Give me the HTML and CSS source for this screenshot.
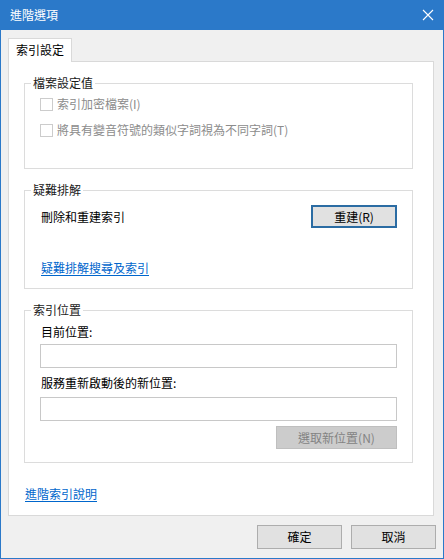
FILE: index.html
```html
<!DOCTYPE html>
<html lang="zh-Hant">
<head>
<meta charset="utf-8">
<title>進階選項</title>
<link rel="stylesheet" href="styles.css">
</head>
<body>
<div class="window">
  <div class="titlebar">
    <span class="title">進階選項</span>
    <svg class="close" width="12" height="12" viewBox="0 0 12 12"><path d="M1 1 L11 11 M11 1 L1 11" stroke="#fff" stroke-width="1.1" fill="none"/></svg>
  </div>
  <div class="tabs"><div class="tab">索引設定</div></div>
  <div class="panel">
    <div class="group g1">
      <div class="legend">檔案設定值</div>
      <div class="row check"><span class="box"></span><span class="dis">索引加密檔案(I)</span></div>
      <div class="row check"><span class="box"></span><span class="dis">將具有變音符號的類似字詞視為不同字詞(T)</span></div>
    </div>
    <div class="group g2">
      <div class="legend">疑難排解</div>
      <div class="rebuild-row"><span>刪除和重建索引</span><button class="btn default">重建(R)</button></div>
      <a class="link trouble" href="#">疑難排解搜尋及索引</a>
    </div>
    <div class="group g3">
      <div class="legend">索引位置</div>
      <div class="label l1">目前位置:</div>
      <div class="input"></div>
      <div class="label l2">服務重新啟動後的新位置:</div>
      <div class="input i2"></div>
      <div class="btnrow"><button class="btn disabled">選取新位置(N)</button></div>
    </div>
    <a class="link help" href="#">進階索引說明</a>
  </div>
  <div class="footer">
    <button class="btn foot">確定</button>
    <button class="btn foot">取消</button>
  </div>
</div>
</body>
</html>
```
FILE: styles.css
```css
* { box-sizing: border-box; }
html, body { margin: 0; padding: 0; }
body {
  font-family: "Noto Sans CJK TC", "Noto Sans", "Liberation Sans", sans-serif;
  font-size: 12px;
  line-height: 16px;
  color: #000;
  background: #f0f0f0;
}
.window {
  width: 444px;
  height: 559px;
  background: #f0f0f0;
  border: 1px solid #2b79c9;
  border-top: none;
  display: flex;
  flex-direction: column;
}
.titlebar {
  height: 30px;
  margin: 0 -1px;
  background: #2b79c9;
  display: flex;
  align-items: center;
  justify-content: space-between;
  padding: 0 10px 0 10px;
  color: #fff;
}
.title { font-size: 12px; line-height: 16px; margin-top: -1px; }
.close { margin-right: 0; }
.tabs {
  margin-top: 8px;
  padding-left: 7px;
  display: flex;
  position: relative;
  z-index: 1;
}
.tab {
  width: 64px;
  height: 24px;
  background: #fff;
  border: 1px solid #d9d9d9;
  border-bottom: none;
  padding: 3px 0 0 7px;
  margin-bottom: -1px;
}
.panel {
  margin-left: 7px;
  width: 426px;
  height: 455px;
  background: #fff;
  border: 1px solid #d9d9d9;
  padding: 0 20px 0 15px;
  display: flex;
  flex-direction: column;
  align-items: flex-start;
}
.group {
  width: 389px;
  border: 1px solid #dcdcdc;
  padding: 0 15px;
  margin-top: 21px;
}
.legend {
  width: max-content;
  height: 16px;
  margin: -9px 0 0 -9px;
  padding: 0 2px;
  background: #fff;
  color: #1a1a1a;
}
.g1 { padding-bottom: 25px; }
.row { height: 26px; display: flex; align-items: center; }
.box {
  width: 13px;
  height: 13px;
  border: 1px solid #cccccc;
  background: #fff;
  margin-right: 4px;
  flex: none;
}
.dis { color: #8c8c8c; }
.g2 { padding-bottom: 12px; }
.rebuild-row {
  margin-top: 7px;
  display: flex;
  justify-content: space-between;
  align-items: center;
  padding-left: 1px;
  height: 23px;
}
.btn {
  font-family: inherit;
  font-size: 12px;
  line-height: 16px;
  padding: 0;
  margin: 0;
  background: #e1e1e1;
  border: 1px solid #adadad;
  color: #000;
}
.btn.default {
  width: 86px;
  height: 23px;
  border: 2px solid #2b6ca3;
}
.link {
  color: #0066cc;
  text-decoration: underline;
  text-underline-offset: 2px;
  display: block;
}
.trouble { margin-top: 32px; margin-left: 1px; }
.g3 { padding-bottom: 13px; }
.label { padding-left: 1px; }
.l1 { margin-top: 6px; }
.input {
  margin-top: 4px;
  height: 24px;
  border: 1px solid #c8c8c8;
  background: #fff;
}
.l2 { margin-top: 7px; }
.i2 { margin-top: 6px; }
.btnrow { display: flex; justify-content: flex-end; margin-top: 5px; }
.btn.disabled {
  width: 121px;
  height: 23px;
  background: #cccccc;
  border: 1px solid #bfbfbf;
  color: #838383;
}
.help { margin-top: 23px; margin-left: 1px; }
.footer {
  display: flex;
  justify-content: flex-end;
  gap: 9px;
  margin-top: 9px;
  padding-right: 7px;
}
.btn.foot {
  width: 85px;
  height: 24px;
}
```
